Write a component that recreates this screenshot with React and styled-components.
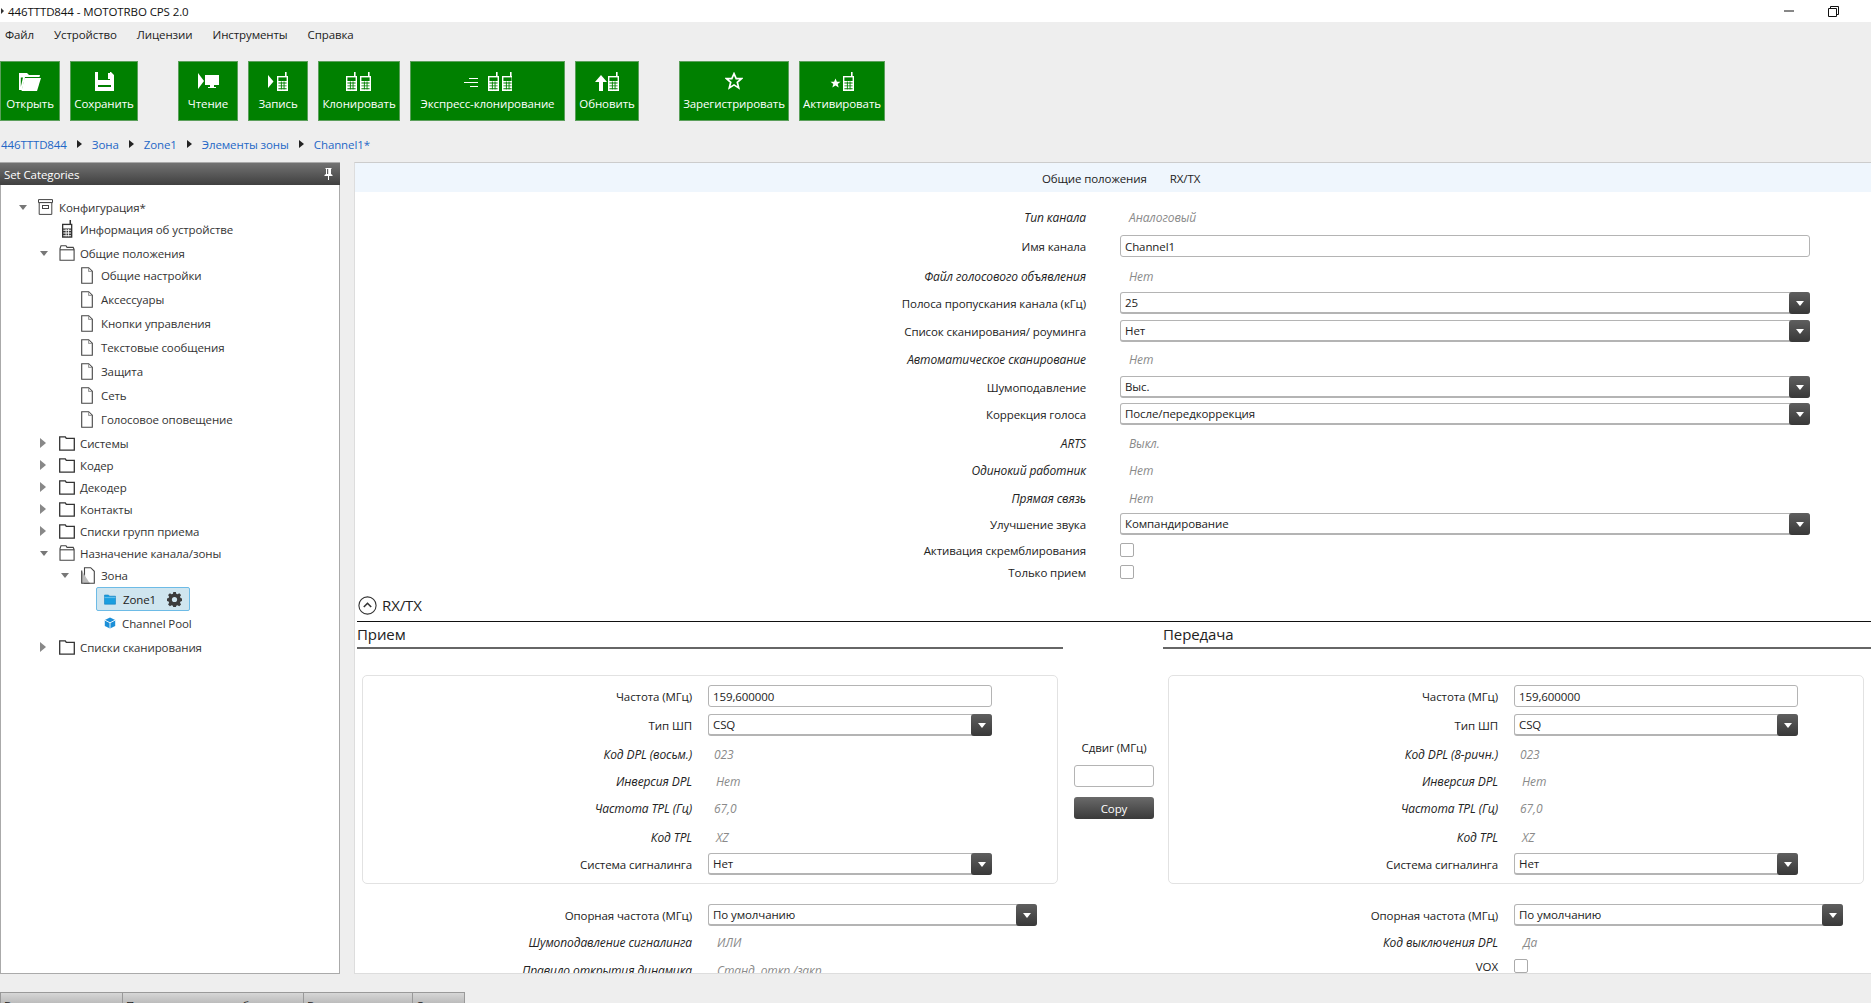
import React from "react";
import styled, { createGlobalStyle } from "styled-components";

const Global = createGlobalStyle`
  html, body { margin: 0; padding: 0; height: 100%; overflow: hidden; background: #eeeeee; }
  #root { height: 100%; }
  * { box-sizing: border-box; }
  body { font-family: "Open Sans", "Noto Sans", "Liberation Sans", sans-serif; font-size: 11.5px; letter-spacing: -.1px; color: #222; }
`;

const Page = styled.div`display:flex;flex-direction:column;height:1003px;width:1871px;overflow:hidden;background:#eee;`;
const TitleBar = styled.div`height:22px;background:#fff;display:flex;align-items:center;padding-left:1px;color:#111;flex:none;`;
const TitleMark = styled.span`width:0;height:0;border-left:3px solid #333;border-top:3px solid transparent;border-bottom:3px solid transparent;margin-right:4px;`;
const TitleText = styled.span`flex:1;font-size:11.5px;`;
const WinBtn = styled.span`display:flex;width:45px;justify-content:center;align-items:center;margin-right:${p=>p.$mr||0}px;`;
const MenuBar = styled.div`height:39px;display:flex;padding:4px 0 0 5px;gap:20px;flex:none;`;
const MenuItem = styled.span`height:18px;line-height:18px;color:#222;`;
const Toolbar = styled.div`height:60px;display:flex;gap:10px;flex:none;`;
const ToolGap = styled.div`width:${p=>p.$w}px;flex:none;`;
const ToolBtn = styled.button`
  width:${p=>p.$w}px;height:60px;background:#008000;border:1px solid #5b9f5b;color:#fff;padding:0;
  font:inherit;letter-spacing:inherit;display:flex;flex-direction:column;align-items:center;flex:none;white-space:nowrap;
`;
const ToolIcon = styled.span`height:20px;margin-top:9px;display:flex;align-items:center;justify-content:center;`;
const ToolLabel = styled.span`margin-top:5px;line-height:16px;`;
const Crumbs = styled.div`height:41px;padding:15px 0 0 1px;display:flex;align-items:flex-start;flex:none;`;
const Crumb = styled.span`color:#2467c6;line-height:18px;`;
const CrumbArrow = styled.span`
  width:0;height:0;border-left:5px solid #222;border-top:4px solid transparent;border-bottom:4px solid transparent;
  margin:4px 10px 0 10px;
`;
const Work = styled.div`display:flex;height:812px;flex:none;gap:14px;`;
const Side = styled.aside`width:340px;flex:none;background:#fff;border:1px solid #aaa;border-top:none;display:flex;flex-direction:column;`;
const SideHead = styled.div`
  height:23px;background:linear-gradient(#727272,#404040);color:#fff;display:flex;align-items:center;
  justify-content:space-between;padding:0 7px 0 4px;margin:0 -1px;border-top:1px solid #aaa;flex:none;
`;
const Tree = styled.div`padding-top:11px;display:flex;flex-direction:column;`;
const TreeRow = styled.div`
  height:22px;display:flex;align-items:center;margin-top:${p=>p.$gap||0}px;padding-left:${p=>17+21*p.$level}px;color:#333;white-space:nowrap;
`;
const ArrowSlot = styled.span`width:16px;flex:none;display:flex;align-items:center;justify-content:flex-start;`;
const IconSlot = styled.span`width:25px;flex:none;padding-left:${p=>p.$pl??4}px;display:flex;align-items:center;`;
const Selected = styled.div`
  margin-left:15px;width:94px;height:24px;background:#cfe5ef;border:1px solid #6dbbe6;border-radius:2px;
  display:flex;align-items:center;padding-left:7px;gap:7px;color:#222;
`;
const ZoneName = styled.span`width:37px;`;
const Main = styled.main`flex:1;min-width:0;background:#fff;border:1px solid #ddd;border-top:1px solid #ccc;border-right:none;overflow:hidden;`;
const TabBand = styled.div`height:29px;background:#eff6fd;display:flex;align-items:center;gap:23px;padding:1px 0 0 687px;color:#222;`;
const Form = styled.div`margin-top:14px;`;
const Row = styled.div`
  height:22px;display:grid;grid-template-columns:${p=>p.$label}px ${p=>p.$ctrl}px;column-gap:${p=>p.$colGap||16}px;align-items:center;
  margin-top:${p=>p.$gap||0}px;
`;
const Label = styled.label`
  text-align:right;color:#222;white-space:nowrap;${p=>p.$i?"font-style:italic;font-size:12px;":""}
`;
const Value = styled.span`color:#8a8a8a;font-style:italic;font-size:12px;padding-left:${p=>p.$pl||9}px;white-space:nowrap;`;
const TextBox = styled.div`height:22px;border:1px solid #b4b4b4;border-radius:3px;background:#fff;padding-left:4px;line-height:21px;color:#222;`;
const SelectBox = styled.div`
  height:22px;border:1px solid #b4b4b4;border-bottom-width:2px;border-radius:3px;background:#fff;padding-left:4px;line-height:20px;color:#222;
  position:relative;
`;
const SelectBtn = styled.span`
  position:absolute;right:-1px;top:-1px;width:21px;height:22px;border-radius:3px;background:linear-gradient(#5f5f5f,#383838);
  display:flex;align-items:center;justify-content:center;
  &::after{content:"";width:0;height:0;border-left:4px solid transparent;border-right:4px solid transparent;border-top:5px solid #fff;}
`;
const Check = styled.span`display:block;width:14px;height:14px;border:1px solid #aaa;border-radius:2px;background:#fff;`;
const SectionHead = styled.div`
  margin:9px 0 0 2px;height:30px;border-bottom:1px solid #111;display:flex;align-items:center;gap:5px;padding:0 0 3px 1px;
  font-size:15px;color:#222;
`;
const Columns = styled.div`display:grid;grid-template-columns:706px 100px 720px;padding-left:2px;`;
const Col = styled.section`min-width:0;`;
const ColHead = styled.h3`
  margin:0;height:27px;border-bottom:2px solid #666;font-weight:400;font-size:15px;line-height:25px;color:#222;
`;
const Card = styled.div`margin:26px 0 0 5px;width:696px;height:209px;border:1px solid #e2e2e2;border-radius:5px;padding-top:9px;`;
const Below = styled.div`margin-top:20px;`;
const Middle = styled.div`padding:115px 0 0 2px;display:flex;flex-direction:column;align-items:center;`;
const MidLabel = styled.div`height:22px;line-height:22px;color:#222;`;
const MidInput = styled.div`width:80px;height:22px;margin-top:6px;border:1px solid #b4b4b4;border-radius:3px;background:#fff;`;
const CopyBtn = styled.button`
  width:80px;height:22px;margin-top:10px;border:none;border-radius:3px;background:linear-gradient(#6a6a6a,#3a3a3a);color:#fff;
  font:inherit;letter-spacing:inherit;padding:0;
`;
const StatusBar = styled.div`margin-top:18px;width:465px;height:11px;display:flex;background:linear-gradient(#d6d6d6,#bcbcbc);border:1px solid #999;border-bottom:none;overflow:hidden;flex:none;`;
const StatusCell = styled.div`width:${p=>p.$w}px;flex:none;padding:5px 0 0 3px;border-right:1px solid #999;line-height:16px;white-space:nowrap;overflow:hidden;color:#222;&:last-child{border-right:none;}`;

/* drawings */
const RadioG = ({ x = 0, y = 0, cut = "#008000", fill = "#fff" }) => (
  <g transform={`translate(${x} ${y})`}>
    <path d="M8 0h1.6v4H11v15H0V4h8z" fill={fill} />
    <rect x="1.4" y="5.4" width="8.2" height="3.6" fill={cut} />
    <path d="M1.4 10.5h8.2v.9H1.4zM1.4 13.4h8.2v.9H1.4zM1.4 16.3h8.2v.9H1.4zM3.9 9.5h.9v8h-.9zM6.6 9.5h.9v8h-.9z" fill={cut} />
  </g>
);
const OpenIco = () => (
  <svg width="22" height="19" viewBox="0 0 22 19" fill="#fff"><path d="M0 1h8l2 2h11l-.5 2H6L3 18H0z" /><path d="M5.5 6H22l-4 13H2.5z" /><path d="M1.8 5.5h2.2L1.8 15z" fill="#008000" /></svg>
);
const SaveIco = () => (
  <svg width="19" height="19" viewBox="0 0 19 19" fill="#fff"><path d="M0 0h3v8h12V0h1l3 3v16H0z" /><path d="M13 1h2v6h-2z" /><rect x="3" y="13" width="13" height="2" fill="#008000" /></svg>
);
const ReadIco = () => (
  <svg width="21" height="16" viewBox="0 0 21 16" fill="#fff"><path d="M0 0l6 8-6 8z" /><path d="M7 2h14v10H16v2h2v1h-8v-1h2v-2H7z" /></svg>
);
const WriteIco = () => (
  <svg width="20" height="19" viewBox="0 0 20 19"><path d="M0 3l5.5 6.5L0 16z" fill="#fff" /><RadioG x={9} /></svg>
);
const CloneIco = () => (
  <svg width="26" height="19" viewBox="0 0 26 19"><RadioG /><RadioG x={14} /></svg>
);
const ExpressIco = () => (
  <svg width="48" height="19" viewBox="0 0 48 19"><path d="M5 6h9v1H5zM0 10h14v1H0zM6 14h8v1H6z" fill="#fff" /><RadioG x={24} /><RadioG x={38} /></svg>
);
const UpdateIco = () => (
  <svg width="24" height="19" viewBox="0 0 24 19"><path d="M6 3l6 7H8v9H4v-9H0z" fill="#fff" /><RadioG x={13} /></svg>
);
const StarIco = () => (
  <svg width="18" height="18" viewBox="0 0 18 18"><path d="M9 1.7l2.2 5h5.3l-4.2 3.6 1.4 5.6L9 12.9l-4.7 3 1.4-5.6L1.5 6.7h5.3z" fill="none" stroke="#fff" strokeWidth="1.7" /></svg>
);
const ActivateIco = () => (
  <svg width="24" height="19" viewBox="0 0 24 19"><path d="M5.5 6.5l1.4 3.2h3.6L7.7 12l1 3.6-3.2-2-3.2 2 1-3.6L.5 9.7h3.6z" fill="#fff" /><RadioG x={13} /></svg>
);

const Down = () => <svg width="10" height="7" viewBox="0 0 10 7"><path d="M1 1h8L5 6z" fill="#777" /></svg>;
const Right = () => <svg width="8" height="10" viewBox="0 0 8 10"><path d="M1 0l6 5-6 5z" fill="#888" /></svg>;
const FileIco = () => <svg width="12" height="17" viewBox="0 0 12 17"><path d="M.7.7h7l3.6 3.6v12H.7z" fill="#fff" stroke="#444" strokeWidth="1.1" /><path d="M7.5 1v3.5H11" fill="#ddd" stroke="#888" strokeWidth=".8" /></svg>;
const FolderIco = () => <svg width="16" height="15" viewBox="0 0 16 15"><path d="M.7 14.2V.8h5.6l1 1.6h8v11.8z" fill="#fff" stroke="#333" strokeWidth="1.3" /></svg>;
const OpenFolderIco = () => <svg width="16" height="16" viewBox="0 0 16 16"><path d="M1 15.2V3.6L2 .8h5l1 1.6h6.2l.9 2v10.8z" fill="#fff" stroke="#444" strokeWidth="1.1" /><path d="M1 4.8h14" stroke="#444" strokeWidth="1.1" /></svg>;
const ConfigIco = () => <svg width="15" height="16" viewBox="0 0 15 16"><path d="M.5.6h14v3H.5z" fill="#fff" stroke="#444" /><path d="M1.2 3.6h12.6v11.8H1.2z" fill="#fff" stroke="#444" /><rect x="4.5" y="6.5" width="6" height="3" fill="none" stroke="#444" /></svg>;
const PhoneIco = () => <svg width="16" height="18" viewBox="0 0 16 18"><g transform="translate(3 0) scale(.94)"><RadioG fill="#333" cut="#fff" /></g></svg>;
const DocsIco = () => <svg width="14" height="17" viewBox="0 0 14 17"><path d="M3.5.7h6.2l3.6 3.6v11.9H3.5z" fill="#fff" stroke="#444" strokeWidth="1.1" /><path d="M.7 3.5v12.8h8" fill="#bbb" stroke="#444" strokeWidth="1.1" /></svg>;
const ZoneIco = () => <svg width="12" height="11" viewBox="0 0 12 11"><path d="M.5 2.2V1h4l1 1.2H11.5v8H.5z" fill="#1a9fe0" stroke="#1680c0" strokeWidth=".6" /><path d="M.5 3.6h11" stroke="#8bd0f2" strokeWidth=".7" /></svg>;
const CubeIco = () => <svg width="12" height="12" viewBox="0 0 12 12"><path d="M6 .5l5.2 2.6v5.8L6 11.5.8 8.9V3.1z" fill="#1b8fd8" /><path d="M6 5.8L.8 3.1M6 5.8l5.2-2.7M6 5.8v5.7" stroke="#fff" strokeWidth=".9" /></svg>;
const GearIco = () => (
  <svg width="15" height="15" viewBox="0 0 15 15"><path d="M6.2 0h2.6l.4 2 1.4.6 1.7-1.1 1.9 1.9-1.1 1.7.6 1.4 2 .4v2.6l-2 .4-.6 1.4 1.1 1.7-1.9 1.9-1.7-1.1-1.4.6-.4 2H6.2l-.4-2-1.4-.6-1.7 1.1L.8 13l1.1-1.7-.6-1.4-2-.4V6.9l2-.4.6-1.4L.8 3.4l1.9-1.9 1.7 1.1 1.4-.6z" transform="translate(.3 -.2) scale(.97)" fill="#3c3c3c" /><circle cx="7.5" cy="7.5" r="2.6" fill="#cfe5ef" /></svg>
);
const Pin = () => <svg width="9" height="12" viewBox="0 0 9 12"><path d="M1.5 0h6v1H7v5l1.5 1v1H5v4H4V8H.5V7L2 6V1h-.5zM3 1v5h1.2V1z" fill="#fff" /></svg>;
const Collapse = () => <svg width="19" height="19" viewBox="0 0 19 19"><circle cx="9.5" cy="9.5" r="8.6" fill="none" stroke="#333" strokeWidth="1.1" /><path d="M5.8 11l3.7-3.7 3.7 3.7" fill="none" stroke="#333" strokeWidth="1.6" /></svg>;

const tools = [
  { w: 60, label: "Открыть", icon: <OpenIco /> },
  { w: 68, label: "Сохранить", icon: <SaveIco /> },
  { gap: 20 },
  { w: 60, label: "Чтение", icon: <ReadIco /> },
  { w: 60, label: "Запись", icon: <WriteIco /> },
  { w: 82, label: "Клонировать", icon: <CloneIco /> },
  { w: 155, label: "Экспресс-клонирование", icon: <ExpressIco /> },
  { w: 64, label: "Обновить", icon: <UpdateIco /> },
  { gap: 20 },
  { w: 110, label: "Зарегистрировать", icon: <StarIco /> },
  { w: 86, label: "Активировать", icon: <ActivateIco /> },
];

const tree = [
  { l: 0, t: "Конфигурация*", a: "d", i: <ConfigIco /> },
  { l: 1, t: "Информация об устройстве", i: <PhoneIco /> },
  { l: 1, t: "Общие положения", a: "d", i: <OpenFolderIco />, g: 2 },
  { l: 2, t: "Общие настройки", i: <FileIco /> },
  { l: 2, t: "Аксессуары", i: <FileIco />, g: 2 },
  { l: 2, t: "Кнопки управления", i: <FileIco />, g: 2 },
  { l: 2, t: "Текстовые сообщения", i: <FileIco />, g: 2 },
  { l: 2, t: "Защита", i: <FileIco />, g: 2 },
  { l: 2, t: "Сеть", i: <FileIco />, g: 2 },
  { l: 2, t: "Голосовое оповещение", i: <FileIco />, g: 2 },
  { l: 1, t: "Системы", a: "r", i: <FolderIco />, g: 2 },
  { l: 1, t: "Кодер", a: "r", i: <FolderIco /> },
  { l: 1, t: "Декодер", a: "r", i: <FolderIco /> },
  { l: 1, t: "Контакты", a: "r", i: <FolderIco /> },
  { l: 1, t: "Списки групп приема", a: "r", i: <FolderIco /> },
  { l: 1, t: "Назначение канала/зоны", a: "d", i: <OpenFolderIco /> },
  { l: 2, t: "Зона", a: "d", i: <DocsIco /> },
  { l: 3, t: "Zone1", sel: true, g: 2 },
  { l: 3, t: "Channel Pool", i: <CubeIco />, g: 2, leaf: true },
  { l: 1, t: "Списки сканирования", a: "r", i: <FolderIco />, g: 2 },
];

const mainRows = [
  { g: 0, label: "Тип канала", v: "Аналоговый" },
  { g: 7, label: "Имя канала", text: "Channel1" },
  { g: 8, label: "Файл голосового объявления", v: "Нет" },
  { g: 5, label: "Полоса пропускания канала (кГц)", sel: "25" },
  { g: 6, label: "Список сканирования/ роуминга", sel: "Нет" },
  { g: 6, label: "Автоматическое сканирование", v: "Нет" },
  { g: 6, label: "Шумоподавление", sel: "Выс." },
  { g: 5, label: "Коррекция голоса", sel: "После/передкоррекция" },
  { g: 7, label: "ARTS", v: "Выкл." },
  { g: 5, label: "Одинокий работник", v: "Нет" },
  { g: 6, label: "Прямая связь", v: "Нет" },
  { g: 4, label: "Улучшение звука", sel: "Компандирование" },
  { g: 4, label: "Активация скремблирования", check: true },
  { g: 0, label: "Только прием", check: true },
];

const cardRows = (dpl) => [
  { g: 0, label: "Частота (МГц)", text: "159,600000" },
  { g: 7, label: "Тип ШП", sel: "CSQ" },
  { g: 7, label: dpl, v: "023", pl: 6 },
  { g: 5, label: "Инверсия DPL", v: "Нет", pl: 8 },
  { g: 5, label: "Частота TPL (Гц)", v: "67,0", pl: 6 },
  { g: 7, label: "Код TPL", v: "XZ", pl: 8 },
  { g: 5, label: "Система сигналинга", sel: "Нет" },
];

const rxBelow = [
  { g: 0, label: "Опорная частота (МГц)", sel: "По умолчанию" },
  { g: 5, label: "Шумоподавление сигналинга", v: "ИЛИ" },
  { g: 6, label: "Правило открытия динамика", v: "Станд. откр./закр." },
];
const txBelow = [
  { g: 0, label: "Опорная частота (МГц)", sel: "По умолчанию" },
  { g: 5, label: "Код выключения DPL", v: "Да" },
  { g: 2, label: "VOX", check: true },
];

const FieldRow = ({ r, label, ctrl, colGap }) => (
  <Row $gap={r.g} $label={label} $ctrl={ctrl} $colGap={colGap}>
    <Label $i={r.v !== undefined}>{r.label}</Label>
    {r.v !== undefined && <Value $pl={r.pl}>{r.v}</Value>}
    {r.text !== undefined && <TextBox>{r.text}</TextBox>}
    {r.sel !== undefined && <SelectBox>{r.sel}<SelectBtn /></SelectBox>}
    {r.check && <Check />}
  </Row>
);

const ChannelCol = ({ title, dpl, below }) => (
  <Col>
    <ColHead>{title}</ColHead>
    <Card>
      {cardRows(dpl).map((r) => <FieldRow key={r.label} r={r} label={329} ctrl={284} />)}
    </Card>
    <Below>
      {below.map((r) => <FieldRow key={r.label} r={r} label={335} ctrl={329} />)}
    </Below>
  </Col>
);

export default function App() {
  return (
    <Page>
      <Global />
      <TitleBar>
        <TitleMark />
        <TitleText>446TTTD844 - MOTOTRBO CPS 2.0</TitleText>
        <WinBtn><svg width="10" height="10" viewBox="0 0 10 10"><path d="M0 5h10" stroke="#111" /></svg></WinBtn>
        <WinBtn $mr={15}><svg width="11" height="11" viewBox="0 0 11 11"><path d="M.5 2.5h8v8h-8zM2.5 2.5v-2h8v8h-2" fill="none" stroke="#111" /></svg></WinBtn>
      </TitleBar>
      <MenuBar>
        {["Файл", "Устройство", "Лицензии", "Инструменты", "Справка"].map((m) => <MenuItem key={m}>{m}</MenuItem>)}
      </MenuBar>
      <Toolbar>
        {tools.map((t, i) => t.gap
          ? <ToolGap key={i} $w={t.gap} />
          : <ToolBtn key={t.label} $w={t.w}><ToolIcon>{t.icon}</ToolIcon><ToolLabel>{t.label}</ToolLabel></ToolBtn>)}
      </Toolbar>
      <Crumbs>
        {["446TTTD844", "Зона", "Zone1", "Элементы зоны", "Channel1*"].map((c, i) => (
          <React.Fragment key={c}>
            {i > 0 && <CrumbArrow />}
            <Crumb>{c}</Crumb>
          </React.Fragment>
        ))}
      </Crumbs>
      <Work>
        <Side>
          <SideHead>Set Categories<Pin /></SideHead>
          <Tree>
            {tree.map((n) => (
              <TreeRow key={n.t} $level={n.l} $gap={n.g}>
                {n.sel ? (
                  <Selected><ZoneIco /><ZoneName>{n.t}</ZoneName><GearIco /></Selected>
                ) : (
                  <>
                    <ArrowSlot>{n.a === "d" ? <Down /> : n.a === "r" ? <Right /> : null}</ArrowSlot>
                    <IconSlot $pl={n.leaf ? 7 : n.l === 2 ? 5 : 4}>{n.i}</IconSlot>
                    {n.t}
                  </>
                )}
              </TreeRow>
            ))}
          </Tree>
        </Side>
        <Main>
          <TabBand><span>Общие положения</span><span>RX/TX</span></TabBand>
          <Form>
            {mainRows.map((r) => <FieldRow key={r.label} r={r} label={731} ctrl={690} colGap={34} />)}
          </Form>
          <SectionHead><Collapse />RX/TX</SectionHead>
          <Columns>
            <ChannelCol title="Прием" dpl="Код DPL (восьм.)" below={rxBelow} />
            <Middle>
              <MidLabel>Сдвиг (МГц)</MidLabel>
              <MidInput />
              <CopyBtn>Copy</CopyBtn>
            </Middle>
            <ChannelCol title="Передача" dpl="Код DPL (8-ричн.)" below={txBelow} />
          </Columns>
        </Main>
      </Work>
      <StatusBar>
        <StatusCell $w={122}>Версия</StatusCell>
        <StatusCell $w={181}>Предпочтительное обновление</StatusCell>
        <StatusCell $w={109}>Версия</StatusCell>
        <StatusCell $w={52}>Статус</StatusCell>
      </StatusBar>
    </Page>
  );
}
